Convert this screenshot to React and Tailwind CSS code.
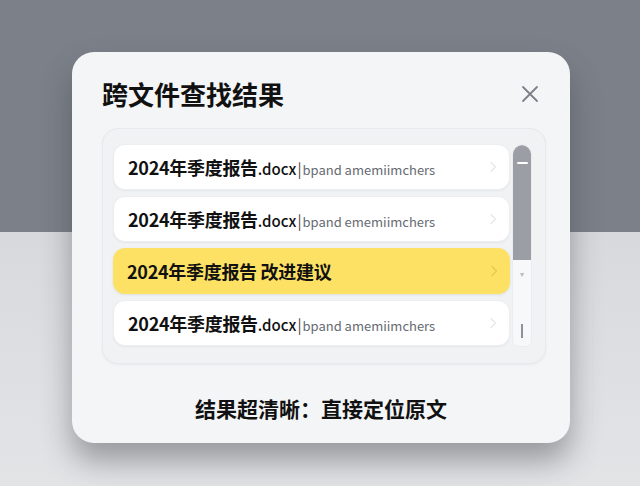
import React from "react";

const rows = [
  { id: 1, name: "2024年季度报告", ext: ".docx", hint: "bpand amemiimchers" },
  { id: 2, name: "2024年季度报告", ext: ".docx", hint: "bpand ememiimchers" },
  { id: 3, name: "2024年季度报告 改进建议", active: true },
  { id: 4, name: "2024年季度报告", ext: ".docx", hint: "bpand amemiimchers" },
];

const Chevron = ({ className }) => (
  <svg width="8" height="12" viewBox="0 0 8 12" className={className}>
    <path d="M2 1.5 L6.5 6 L2 10.5" fill="none" stroke="currentColor" strokeWidth="1.2" strokeLinecap="round" strokeLinejoin="round" />
  </svg>
);

const ResultRow = ({ row }) => (
  <div
    className={
      "flex items-center h-[46px] pl-[14px] pr-[12px] rounded-[12px] " +
      (row.active
        ? "bg-[#fde164] shadow-[0_1px_3px_rgba(0,0,0,0.08)]"
        : "bg-white shadow-[0_1px_2px_rgba(0,0,0,0.05)] border border-[#eceef1]")
    }
  >
    <div className="flex-1 flex items-baseline whitespace-nowrap overflow-hidden">
      <span className="text-[18px] font-semibold text-[#111] tracking-[-0.3px]">{row.name}</span>
      {row.ext && (
        <>
          <span className="text-[15px] font-medium text-[#111]">{row.ext}</span>
          <span className="text-[15px] text-[#444] mx-[1px]">|</span>
          <span className="text-[13px] text-[#666a71]">{row.hint}</span>
        </>
      )}
    </div>
    <Chevron className={row.active ? "text-[#e9c84a]" : "text-[#e6e7ea]"} />
  </div>
);

export default function App() {
  return (
    <div
      className="w-[640px] h-[486px] overflow-hidden pt-[52px] flex justify-center bg-[linear-gradient(to_bottom,#7b8089_0px,#7b8089_232px,#d8d9dc_232px,#e3e4e6_486px)]"
      style={{ fontFamily: '"Noto Sans CJK SC", "Noto Sans", sans-serif' }}
    >
      <div className="w-[498px] h-[391px] ml-[2px] rounded-[22px] bg-[#f4f5f7] shadow-[0_18px_30px_rgba(60,64,72,0.45)] flex flex-col pl-[30px] pr-[24px] pt-[22px]">
        <div className="flex items-center justify-between h-[40px]">
          <h1 className="text-[26px] font-bold text-[#111] leading-none">跨文件查找结果</h1>
          <svg width="20" height="20" viewBox="0 0 20 20" className="text-[#7d8088] mr-[6px]">
            <path d="M3 3 L17 17 M17 3 L3 17" stroke="currentColor" strokeWidth="1.8" strokeLinecap="round" />
          </svg>
        </div>

        <div className="mt-[14px] h-[236px] rounded-[16px] bg-[#f1f2f4] border border-[#e8e9ec] shadow-[0_1px_3px_rgba(0,0,0,0.05)] flex pl-[10px] pr-[13px] pt-[15px] pb-[16px] gap-[2px]">
          <div className="flex-1 flex flex-col gap-[6px]">
            {rows.map((r) => (
              <ResultRow key={r.id} row={r} />
            ))}
          </div>
          <div className="w-[20px] rounded-t-[10px] rounded-b-[6px] bg-[#f7f8f9] border border-[#ebecef] flex flex-col items-center overflow-hidden">
            <div className="w-full h-[115px] bg-[#9b9ea5] rounded-t-[10px] flex justify-center pt-[17px]">
              <div className="w-[11px] h-[2px] bg-white rounded" />
            </div>
            <div className="mt-[10px] text-[8px] leading-none text-[#b8bbc0]">▾</div>
            <div className="flex-1" />
            <div className="w-[2px] h-[14px] bg-[#8e9197] mb-[8px]" />
          </div>
        </div>

        <div className="flex-1 flex items-center justify-center pr-[6px] pt-[10px]">
          <p className="text-[21px] font-semibold text-[#111]">结果超清晰：直接定位原文</p>
        </div>
      </div>
    </div>
  );
}
